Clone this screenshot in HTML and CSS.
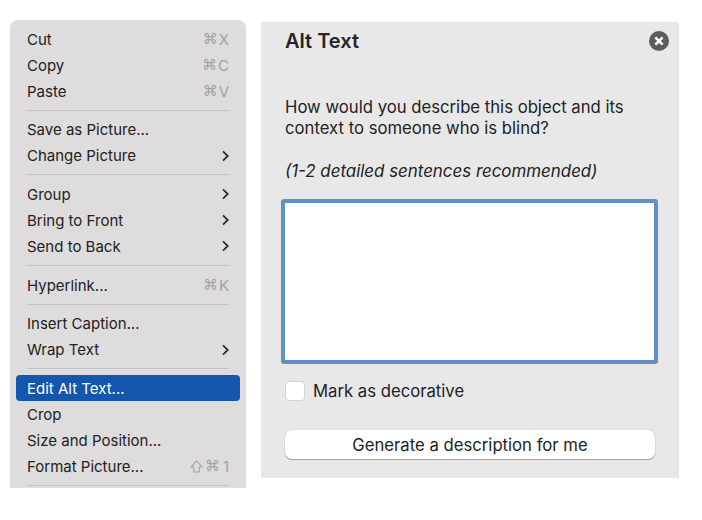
FILE: index.html
```html
<!DOCTYPE html>
<html lang="en">
<head>
  <meta charset="UTF-8" />
  <title>Edit Alt Text</title>
  <meta name="viewport" content="width=device-width, initial-scale=1" />
  <link rel="stylesheet" href="styles.css">
</head>
<body>
  <div class="page">
    <ul class="menu">
      <li class="item"><span>Cut</span><span class="keys">⌘<i>X</i></span></li>
      <li class="item"><span>Copy</span><span class="keys">⌘<i>C</i></span></li>
      <li class="item"><span>Paste</span><span class="keys">⌘<i>V</i></span></li>
      <li class="sep"></li>
      <li class="item"><span>Save as Picture...</span></li>
      <li class="item"><span>Change Picture</span><svg class="chev" viewBox="0 0 9 12"><path d="M3 1.4 7.8 6 3 10.6"/></svg></li>
      <li class="sep"></li>
      <li class="item"><span>Group</span><svg class="chev" viewBox="0 0 9 12"><path d="M3 1.4 7.8 6 3 10.6"/></svg></li>
      <li class="item"><span>Bring to Front</span><svg class="chev" viewBox="0 0 9 12"><path d="M3 1.4 7.8 6 3 10.6"/></svg></li>
      <li class="item"><span>Send to Back</span><svg class="chev" viewBox="0 0 9 12"><path d="M3 1.4 7.8 6 3 10.6"/></svg></li>
      <li class="sep"></li>
      <li class="item"><span>Hyperlink...</span><span class="keys">⌘<i>K</i></span></li>
      <li class="sep"></li>
      <li class="item"><span>Insert Caption...</span></li>
      <li class="item"><span>Wrap Text</span><svg class="chev" viewBox="0 0 9 12"><path d="M3 1.4 7.8 6 3 10.6"/></svg></li>
      <li class="sep"></li>
      <li class="item active"><span>Edit Alt Text...</span></li>
      <li class="item"><span>Crop</span></li>
      <li class="item"><span>Size and Position...</span></li>
      <li class="item"><span>Format Picture...</span><span class="keys"><svg class="shift" viewBox="0 0 13 13"><path d="M6.5 1 12 7H9.2V12H3.8V7H1Z"/></svg>⌘<i class="one">1</i></span></li>
      <li class="sep"></li>
    </ul>

    <section class="panel">
      <header class="panel-head">
        <h1>Alt Text</h1>
        <svg class="close" viewBox="0 0 20 20"><circle cx="10" cy="10" r="10"/><path d="M6.4 6.4 13.6 13.6M13.6 6.4 6.4 13.6"/></svg>
      </header>
      <p class="question">How would you describe this object and its context to someone who is blind?</p>
      <p class="hint">(1-2 detailed sentences recommended)</p>
      <div class="textbox"></div>
      <div class="check-row"><span class="check"></span><span>Mark as decorative</span></div>
      <button type="button" class="generate">Generate a description for me</button>
    </section>
  </div>
</body>
</html>
```

FILE: styles.css
```css
body {
  font-family: 'Inter', 'Liberation Sans', sans-serif;
  background: #ffffff;
  color: #222222;
  margin: 0;
  padding: 0;
}

.page {
  display: flex;
  align-items: flex-start;
  gap: 15px;
  padding: 20px 0 0 10px;
}

.menu {
  box-sizing: border-box;
  width: 236px;
  height: 468px;
  margin: 0;
  padding: 6px 6px 0;
  list-style: none;
  overflow: hidden;
  background: #dedcdc;
  border-radius: 8px 8px 0 0;
  font-size: 15px;
}

.item {
  display: flex;
  align-items: center;
  justify-content: space-between;
  height: 26px;
  padding: 0 11px;
  border-radius: 4px;
}

.sep {
  height: 1px;
  margin: 5.5px 11px 6.2px;
  background: #c4c2c2;
}

.active {
  background: #1257ad;
  color: #ffffff;
}

.keys {
  display: flex;
  align-items: center;
  color: #a3a2a2;
  font-family: 'DejaVu Sans', sans-serif;
  font-size: 15px;
}

.keys i {
  margin-left: 1px;
  font-family: 'Inter', sans-serif;
  font-style: normal;
}

.keys .one {
  margin-left: 3px;
}

.shift {
  width: 13px;
  height: 13px;
  margin-right: 2px;
  fill: none;
  stroke: #a3a2a2;
  stroke-width: 1.1;
}

.chev {
  width: 9px;
  height: 12px;
  fill: none;
  stroke: #2b2b2b;
  stroke-width: 1.8;
}

.panel {
  box-sizing: border-box;
  width: 418px;
  height: 456px;
  margin-top: 2px;
  padding: 0 10px 0 24px;
  background: #e8e8e8;
}

.panel-head {
  display: flex;
  align-items: center;
  justify-content: space-between;
  height: 37px;
}

h1 {
  margin: 0;
  font-size: 20px;
  font-weight: 600;
  color: #252525;
}

.close {
  width: 20px;
  height: 20px;
  fill: #5c5c5c;
  stroke: #ffffff;
  stroke-width: 2.6;
}

.close circle {
  stroke: none;
}

.question {
  margin: 38px 0 0;
  font-size: 16.7px;
  line-height: 21px;
  width: 350px;
}

.hint {
  margin: 22px 0 0;
  font-size: 16.9px;
  line-height: 21px;
  font-style: italic;
}

.textbox {
  box-sizing: border-box;
  width: 377px;
  height: 165px;
  margin: 17px 0 0 -4px;
  background: #ffffff;
  border: 4px solid #6290c4;
  border-radius: 3px;
}

.check-row {
  display: flex;
  align-items: center;
  gap: 8px;
  height: 22px;
  margin-top: 16px;
  font-size: 16.7px;
}

.check {
  box-sizing: border-box;
  width: 20px;
  height: 20px;
  background: #ffffff;
  border: 1px solid #d4d4d4;
  border-radius: 4px;
}

.generate {
  display: block;
  width: 370px;
  height: 29px;
  margin-top: 28px;
  padding: 0;
  background: #ffffff;
  color: #222222;
  font-family: inherit;
  font-size: 16.7px;
  border: none;
  border-radius: 7px;
  box-shadow: 0 1px 1px rgba(0, 0, 0, 0.3), 0 0 1px rgba(0, 0, 0, 0.25);
}
```
